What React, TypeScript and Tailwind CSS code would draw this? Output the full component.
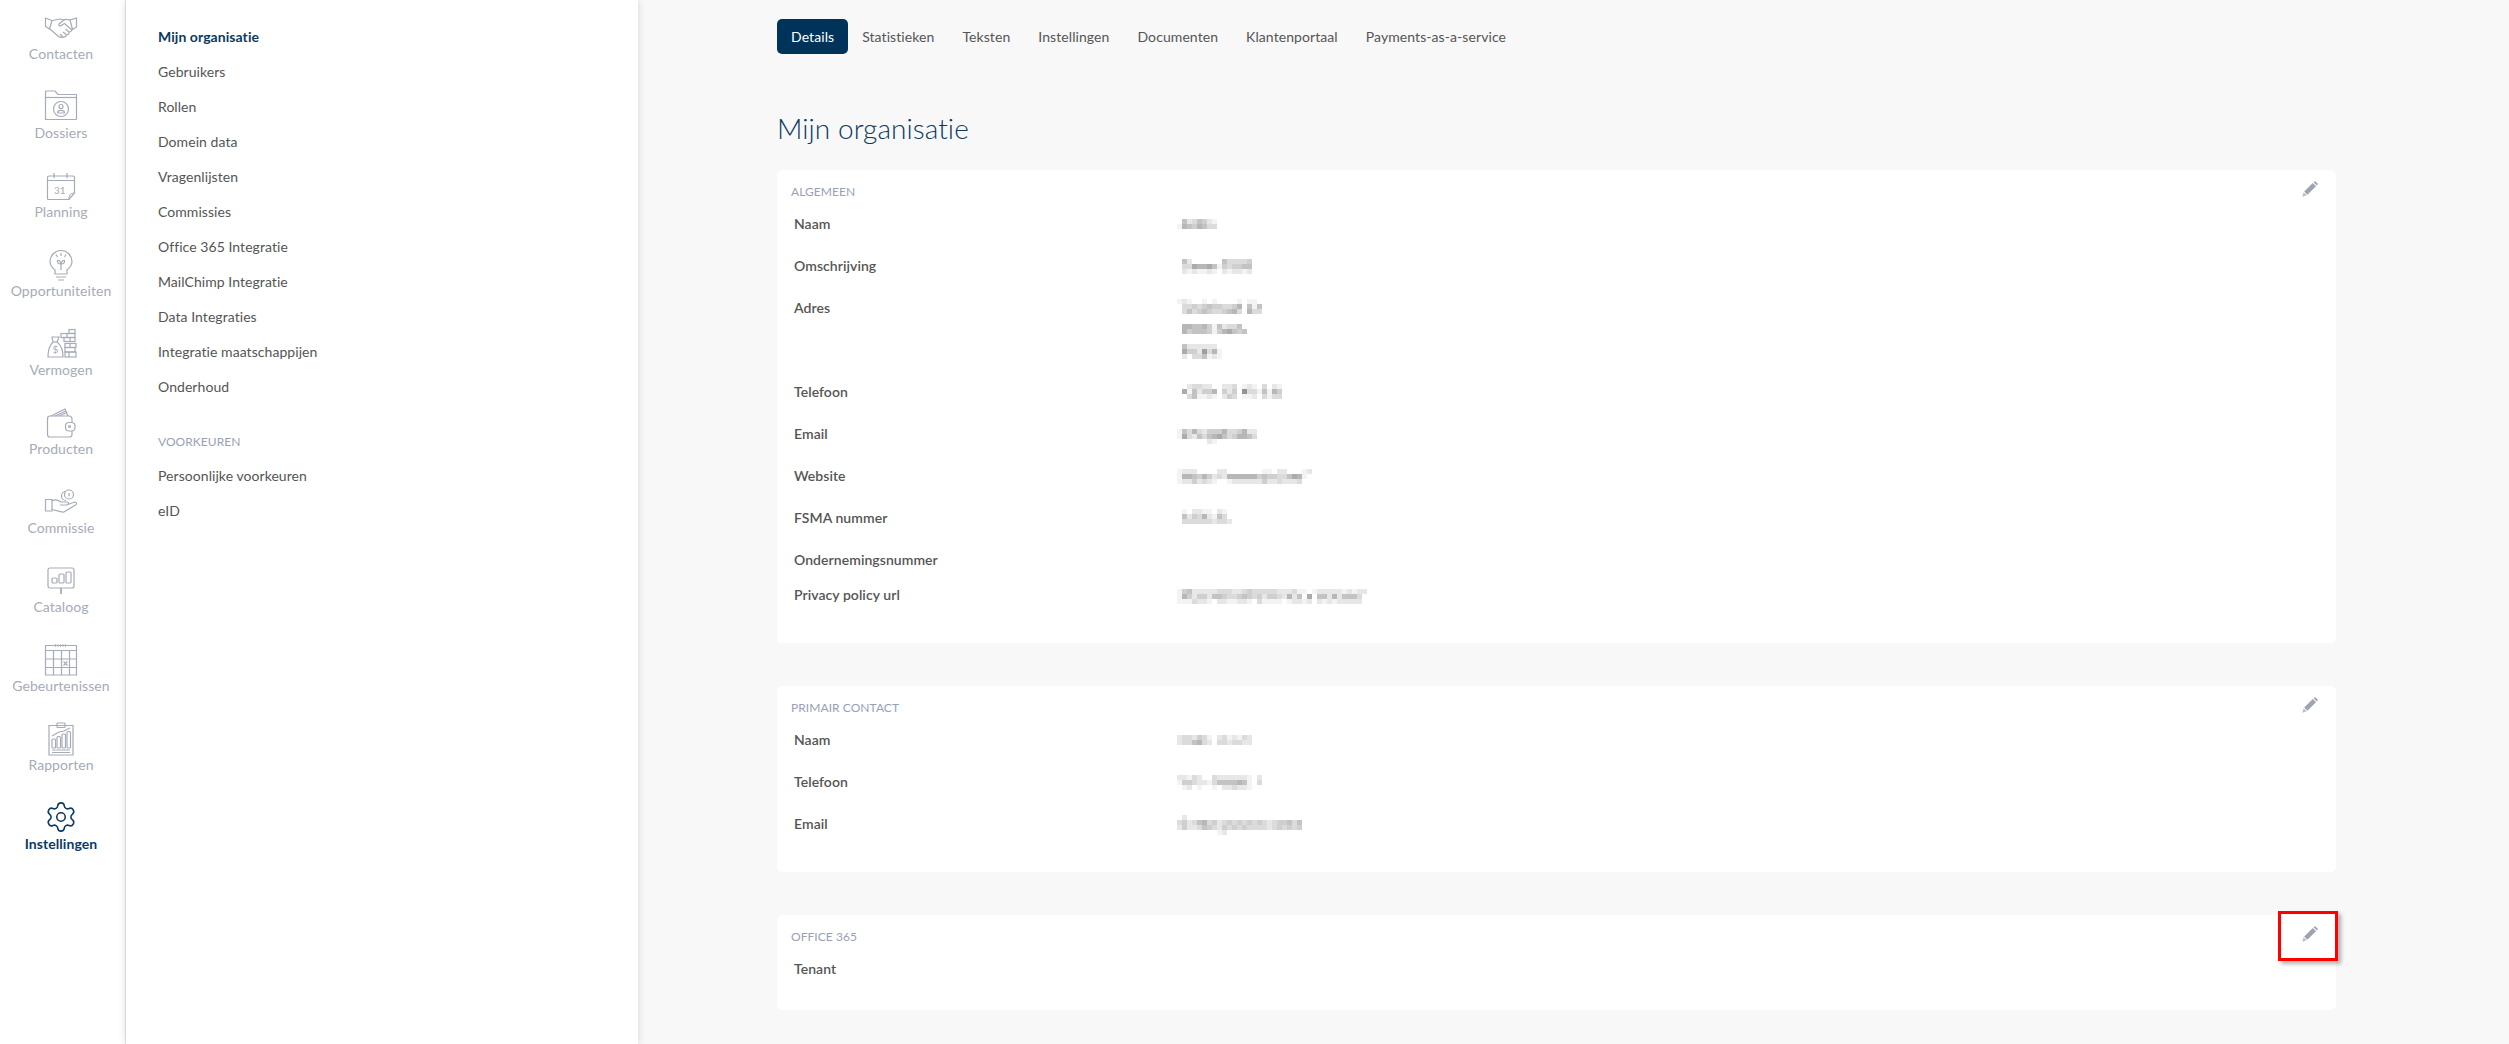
import { ReactNode } from 'react';
import { Settings } from 'lucide-react';

const line = 'fill-none stroke-[#a6abb8] stroke-[1.2]';

function Icon({ children }: { children: ReactNode }) {
  return (
    <svg width={32} height={32} viewBox="0 0 32 32" className={`${line} overflow-visible`}>
      {children}
    </svg>
  );
}

const icons: Record<string, ReactNode> = {
  Contacten: (
    <Icon>
      <path d="M.5 7 7 9.5 4.5 18 .5 15.5Z" />
      <path d="M31.5 7 25 9l2.5 9.5 4-2.5Z" />
      <path d="M7 9.5c3 0 5-1.5 8-1.5l4 1c2-1.5 4 0 6 0" />
      <path d="M19 9l-5 4c-1 2 1.5 2.5 3 1l2.5-1.5L27 19" />
      <path d="M5 18l8 7c2 2 4 1.5 5 1 2 .5 3.5-1 3.5-2 1.5 0 3-1.5 2.5-3 2 0 3-1.5 2.5-2.5" />
      <path d="M18 26l-3-3M21.5 24l-3.5-3M24 21l-3.5-3" />
    </Icon>
  ),
  Dossiers: (
    <Icon>
      <path d="M.5 29.5V2q0-1 1-1H10l3 3.5h18q.5 0 .5.5v23.5q0 1-1 1Z" />
      <path d="M.5 7.5h31" />
      <circle cx="16" cy="19" r="7.5" />
      <circle cx="16" cy="16.5" r="2" />
      <path d="M12.5 23c0-3.5 7-3.5 7 0Z" />
    </Icon>
  ),
  Planning: (
    <Icon>
      <path d="M2.5 29.5V8q0-1 1.5-1h24q1.5 0 1.5 1v16L24 30.5H3.5q-1 0-1-1Z" />
      <path d="M29.5 24c-3.5 0-5.5 1-5.5 6.5M2.5 11.5h27M9 4v5M22 4v5" />
      <text x="9" y="25" className="fill-[#a6abb8] stroke-none text-[10px]">31</text>
    </Icon>
  ),
  Opportuniteiten: (
    <Icon>
      <path d="M10 22c-3-2.5-5-5-5-8.5a11 11 0 0 1 22 0c0 3.5-2 6-5 8.5v4H10Z" />
      <path d="M11 29h10M13 32h6M16 22v-8" />
      <path d="M16 16c-3 0-4-2-3.5-3.5 2-.5 3.5 1.5 3.5 3.5ZM16 16c3 0 4-2 3.5-3.5-2-.5-3.5 1.5-3.5 3.5Z" />
      <path d="M16 5v3M11 6.5l1.5 2.5M21 6.5 19.5 9" />
    </Icon>
  ),
  Vermogen: (
    <Icon>
      <path d="M7 10h7l-2 5c4 3 6 7 6 15H3c0-7 2-12 5-15Z" />
      <path d="M7.5 15H12" />
      <text x="7.5" y="26" className="fill-[#a6abb8] stroke-none text-[10px]">$</text>
      <rect x="24" y="2.5" width="6" height="4" />
      <rect x="16" y="6.5" width="14" height="4" />
      <rect x="19" y="10.5" width="11" height="4" />
      <rect x="20" y="16.5" width="11" height="4" />
      <rect x="20" y="20.5" width="10" height="4.5" />
      <rect x="20" y="25" width="11" height="5" />
      <path d="M22 6.5v4M25 10.5v4M25 16.5v4M24 25v5" />
    </Icon>
  ),
  Producten: (
    <Icon>
      <path d="M27 16v-3q0-3-3-3H5q-2.5 0-2.5 3v15.5q0 2.5 2.5 2.5h19q3 0 3-2.5V25" />
      <rect x="20.5" y="16.5" width="9.5" height="8.5" rx="3.5" />
      <circle cx="24.5" cy="20.5" r="1" />
      <path d="M6 10 20 3l3 7M10 10l11-5M14 10l8-3.5" />
    </Icon>
  ),
  Commissie: (
    <Icon>
      <circle cx="24" cy="9.5" r="4.5" />
      <path d="M21 6.5a4.5 4.5 0 1 0 0 9M24 8v3.5" />
      <path d="M.5 14.5h6.5v11.5H.5ZM7 16c3-2 6-1 9 1h6c2 0 2 3 0 3h-7" />
      <path d="M22.5 19.5 30 17c2 0 2 2 .5 3L19 27c-2 .5-5-1-12-2.5" />
    </Icon>
  ),
  Cataloog: (
    <Icon>
      <rect x="3" y="4" width="26" height="20" rx="2" />
      <path d="M16 24v6" strokeWidth="1.8" />
      <rect x="7" y="14" width="5" height="5" rx="1" />
      <rect x="14" y="10" width="5" height="9" rx="1" />
      <rect x="21" y="8" width="5" height="11" rx="1" />
    </Icon>
  ),
  Gebeurtenissen: (
    <Icon>
      <path d="M.5 2.5h31v29.5H.5ZM.5 7.5h31M.5 16h31M.5 24.5h31M8.5 7.5V32M16.5 7.5V32M24.5 7.5V32" />
      <path d="M18.5 18.5l4 4M22.5 18.5l-4 4" />
      <path d="M10.5 1v3M13 1v3M15.5 1v3M18 1v3M20.5 1v3" strokeWidth=".8" />
    </Icon>
  ),
  Rapporten: (
    <Icon>
      <path d="M4 3.5h24v29.5H4Z" />
      <rect x="12" y="1" width="8" height="4.5" rx=".5" />
      <path d="M7 14l7-4 5-1 6-3M7 28h18M7 30.5h18" />
      <rect x="7" y="17" width="3.5" height="9" rx="1" />
      <rect x="12" y="14.5" width="3.5" height="11.5" rx="1" />
      <rect x="17" y="12" width="3.5" height="14" rx="1" />
      <rect x="22" y="9.5" width="3.5" height="16.5" rx="1" />
    </Icon>
  ),
  Instellingen: <Settings size={34} strokeWidth={1.1} className="-m-px text-[#0b3a61]" />,
};

const railItems = [
  'Contacten',
  'Dossiers',
  'Planning',
  'Opportuniteiten',
  'Vermogen',
  'Producten',
  'Commissie',
  'Cataloog',
  'Gebeurtenissen',
  'Rapporten',
  'Instellingen',
];

const menu = [
  'Mijn organisatie',
  'Gebruikers',
  'Rollen',
  'Domein data',
  'Vragenlijsten',
  'Commissies',
  'Office 365 Integratie',
  'MailChimp Integratie',
  'Data Integraties',
  'Integratie maatschappijen',
  'Onderhoud',
];

const tabs = ['Details', 'Statistieken', 'Teksten', 'Instellingen', 'Documenten', 'Klantenportaal', 'Payments-as-a-service'];

type Masked = { top: number; rows: string[] };
type Field = { label: string; value?: Masked[] };

// the values are pixelated in the picture: one hex digit per 5px cell, higher is darker
function Mosaic({ top, rows }: Masked) {
  return (
    <svg width={rows[0].length * 5} height={21} className="block overflow-visible">
      {rows.map((row, y) =>
        row.split('').map((cell, x) => {
          const shade = 255 - parseInt(cell, 16) * 12;
          return (
            <rect key={`${x}-${y}`} x={x * 5} y={top + y * 5} width={5} height={5} fill={`rgb(${shade},${shade},${shade})`} />
          );
        }),
      )}
    </svg>
  );
}

const general: Field[] = [
  { label: 'Naam', value: [{ top: 5, rows: ['05235421', '16546533'] }] },
  { label: 'Omschrijving', value: [{ top: 3, rows: ['052000000533334', '033766751434455', '021211210212212'] }] },
  {
    label: 'Adres',
    value: [
      { top: 1, rows: ['12100101000010110', '03343454433460515', '03534543345630633'] },
      { top: 5, rows: ['06655641523350', '06455541467545'] },
      { top: 4, rows: ['052222220', '074428361', '020335121'] },
    ],
  },
  { label: 'Telefoon', value: [{ top: 2, rows: ['002332200223012103021', '071524460424093315164', '003511210243011203133'] }] },
  { label: 'Email', value: [{ top: 5, rows: ['15363244463346220', '17325356753466530', '00000021000000000'] }] },
  {
    label: 'Website',
    value: [{ top: 3, rows: ['122200002200000001102200012', '166546423266666645443357610', '122423210012222224223222300'] }],
  },
  { label: 'FSMA nummer', value: [{ top: 1, rows: ['01022110210', '05243621530', '03333332332'] }] },
  { label: 'Ondernemingsnummer' },
  {
    label: 'Privacy policy url',
    value: [
      {
        top: 4,
        rows: [
          '14522222333223433333222311012222212122',
          '16424425543345434244326250705526255530',
          '11132210221122103111101221202121222220',
        ],
      },
    ],
  },
];

const contact: Field[] = [
  { label: 'Naam', value: [{ top: 5, rows: ['233243102312132', '233563203323322'] }] },
  { label: 'Telefoon', value: [{ top: 3, rows: ['22132003222222102', '14432213555565103', '01201001022322100'] }] },
  {
    label: 'Email',
    value: [
      {
        top: 1,
        rows: [
          '0200000000000000000000000',
          '3423563423434343432344535',
          '2422354324343433332343434',
          '0000000012000000000000000',
        ],
      },
    ],
  },
];

function Pencil() {
  return (
    <svg width={16} height={16} viewBox="0 0 16 16" className="fill-[#9ea3b0]">
      <path d="M2.2 10.6 10.8 2l3.2 3.2-8.6 8.6Z" />
      <path d="M11.6 1.2 12.4.4q.5-.4 1 0l2.2 2.2q.4.5 0 1l-.8.8Z" />
      <path d="M1.7 11.3 4.7 14.3.3 15.7Z" opacity=".7" />
    </svg>
  );
}

function Card({ title, fields, highlight }: { title: string; fields: Field[]; highlight?: boolean }) {
  return (
    <section className="relative rounded-[5px] bg-white pb-4">
      <div className="flex h-11 items-start justify-between pl-[14px] pr-[18px] pt-[11px]">
        <h2 className="mt-[2px] text-xs uppercase leading-[17px] text-[#97a1b5]">{title}</h2>
        <Pencil />
      </div>
      {fields.map((field) => (
        <div key={field.label} className="grid grid-cols-[383px_1fr] pl-[17px]">
          <div className="pb-[16px] text-sm font-semibold leading-[19px] text-[#555555]">{field.label}</div>
          {field.value && (
            <div className="pb-[21px]">
              {field.value.map((masked) => (
                <Mosaic key={masked.rows[0]} {...masked} />
              ))}
            </div>
          )}
        </div>
      ))}
      {highlight && (
        <div className="absolute -right-[2px] -top-[4px] h-[50px] w-[60px] border-[3px] border-[#ff0000] shadow-[3px_3px_4px_rgba(0,0,0,0.3)]" />
      )}
    </section>
  );
}

export default function App() {
  return (
    <div className="flex h-screen overflow-hidden bg-[#f8f8f8] font-['Lato','Liberation_Sans',sans-serif] text-sm tracking-[0.06px] text-[#555555]">
      <aside className="w-[126px] shrink-0 border-r border-[#e6e6e6] bg-white pr-[3px] pt-[11px]">
        {railItems.map((item) => (
          <div key={item} className="flex h-[79px] flex-col items-center">
            {icons[item]}
            <span
              className={
                item === 'Instellingen'
                  ? 'text-sm font-bold leading-[21px] text-[#0b3a61]'
                  : 'text-sm leading-[21px] text-[#a6abb8]'
              }
            >
              {item}
            </span>
          </div>
        ))}
      </aside>

      <nav className="relative z-10 w-[512px] shrink-0 bg-white pl-[32px] pt-[19px] shadow-[0_0_8px_rgba(0,0,0,0.14)]">
        {menu.map((item, index) => (
          <div
            key={item}
            className={index === 0 ? 'h-[35px] font-bold leading-[35px] text-[#0b3a61]' : 'h-[35px] leading-[35px]'}
          >
            {item}
          </div>
        ))}
        <div className="mt-[20px] h-[34px] text-xs uppercase leading-[35px] text-[#97a1b5]">Voorkeuren</div>
        <div className="h-[35px] leading-[35px]">Persoonlijke voorkeuren</div>
        <div className="h-[35px] leading-[35px]">eID</div>
      </nav>

      <main className="min-w-0 flex-1 pl-[139px] pr-[173px] pt-[19px]">
        <div className="flex tracking-[0.08px]">
          {tabs.map((tab, index) => (
            <div
              key={tab}
              className={
                index === 0
                  ? 'rounded-[5px] bg-[#003359] px-[14px] py-[7px] leading-[21px] text-white'
                  : 'px-[14px] py-[7px] leading-[21px]'
              }
            >
              {tab}
            </div>
          ))}
        </div>
        <h1 className="mb-[24px] mt-[56px] text-[28px] font-light leading-[36px] text-[#0b3a61]">Mijn organisatie</h1>
        <div className="flex flex-col gap-[43px]">
          <Card title="Algemeen" fields={general} />
          <Card title="Primair contact" fields={contact} />
          <Card title="Office 365" fields={[{ label: 'Tenant' }]} highlight />
        </div>
      </main>
    </div>
  );
}
